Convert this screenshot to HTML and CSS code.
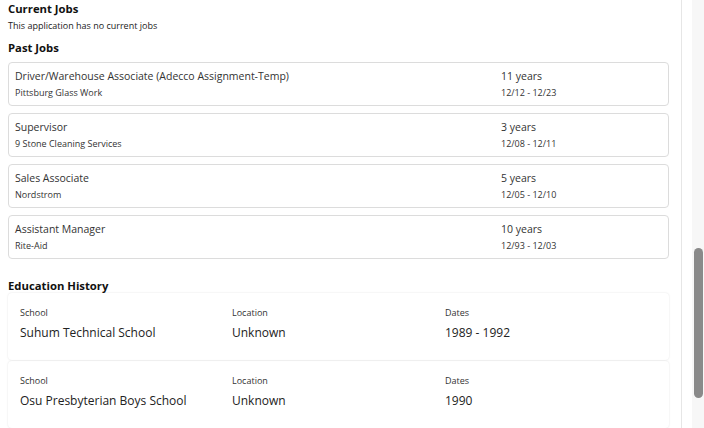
FILE: index.html
```html
<!DOCTYPE html>
<html>
<head>
<meta charset="utf-8">
<link rel="stylesheet" href="styles.css">
</head>
<body>
<div class="frame">
  <main class="main">
    <h2 class="heading first">Current Jobs</h2>
    <p class="note">This application has no current jobs</p>
    <h2 class="heading past">Past Jobs</h2>
    <div class="jobs">
      <div class="job">
        <div class="job-title">Driver/Warehouse Associate (Adecco Assignment-Temp)</div>
        <div class="job-years">11 years</div>
        <div class="job-sub">Pittsburg Glass Work</div>
        <div class="job-sub">12/12 - 12/23</div>
      </div>
      <div class="job">
        <div class="job-title">Supervisor</div>
        <div class="job-years">3 years</div>
        <div class="job-sub">9 Stone Cleaning Services</div>
        <div class="job-sub">12/08 - 12/11</div>
      </div>
      <div class="job">
        <div class="job-title">Sales Associate</div>
        <div class="job-years">5 years</div>
        <div class="job-sub">Nordstrom</div>
        <div class="job-sub">12/05 - 12/10</div>
      </div>
      <div class="job">
        <div class="job-title">Assistant Manager</div>
        <div class="job-years">10 years</div>
        <div class="job-sub">Rite-Aid</div>
        <div class="job-sub">12/93 - 12/03</div>
      </div>
    </div>
    <h2 class="heading edu-head">Education History</h2>
    <div class="edu-list">
      <div class="edu">
        <div class="edu-label">School</div>
        <div class="edu-label">Location</div>
        <div class="edu-label">Dates</div>
        <div class="edu-value">Suhum Technical School</div>
        <div class="edu-value">Unknown</div>
        <div class="edu-value">1989 - 1992</div>
      </div>
      <div class="edu">
        <div class="edu-label">School</div>
        <div class="edu-label">Location</div>
        <div class="edu-label">Dates</div>
        <div class="edu-value">Osu Presbyterian Boys School</div>
        <div class="edu-value">Unknown</div>
        <div class="edu-value">1990</div>
      </div>
    </div>
  </main>
  <div class="gutter"></div>
  <div class="track"><div class="thumb"></div></div>
</div>
</body>
</html>
```
FILE: styles.css
```css
html, body {
  margin: 0;
  padding: 0;
  background: #ffffff;
}
body {
  font-family: "Open Sans", "Noto Sans", sans-serif;
  color: #222;
  width: 704px;
  height: 428px;
  overflow: hidden;
}
.frame {
  display: flex;
  height: 428px;
}
.main {
  width: 661px;
  padding: 0 12px 0 8px;
  border-right: 1px solid #e6e6e6;
  flex: none;
  height: 428px;
  overflow: hidden;
}
.gutter {
  width: 10px;
  flex: none;
}
.track {
  width: 12px;
  flex: none;
  background: #f7f7f7;
  padding-top: 248px;
  box-sizing: border-box;
}
.thumb {
  width: 9px;
  margin-left: 2px;
  height: 150px;
  border-radius: 5px;
  background: #8a8a8a;
}
.heading {
  margin: 0;
  font-size: 11.3px;
  line-height: 16px;
  font-weight: 700;
  color: #111;
}
.heading.first { margin-top: 1px; }
.note {
  margin: 3px 0 0;
  font-size: 9px;
  line-height: 12px;
  color: #222;
}
.heading.past { margin-top: 8px; }
.jobs {
  margin-top: 6px;
  display: flex;
  flex-direction: column;
  gap: 7px;
}
.job {
  border: 1px solid #dcdcdc;
  border-radius: 4px;
  padding: 5px 6px 6px;
  display: grid;
  grid-template-columns: 486px 1fr;
  row-gap: 3px;
}
.job-title, .job-years {
  font-size: 10.5px;
  line-height: 16px;
  color: #333;
}
.job-sub {
  font-size: 9px;
  line-height: 12px;
  color: #333;
}
.heading.edu-head {
  margin-top: 19px;
  line-height: 15px;
}
.edu-list {
  display: flex;
  flex-direction: column;
  gap: 1px;
}
.edu {
  height: 67px;
  box-sizing: border-box;
  border-radius: 4px;
  box-shadow: 0 0 2px rgba(0,0,0,0.12);
  padding: 14px 12px 0;
  display: grid;
  grid-template-columns: 212px 213px 1fr;
  grid-template-rows: 12px 16px;
  row-gap: 6px;
}
.edu-label {
  font-size: 9px;
  line-height: 12px;
  color: #333;
}
.edu-value {
  font-size: 12px;
  line-height: 16px;
  color: #222;
}
```
